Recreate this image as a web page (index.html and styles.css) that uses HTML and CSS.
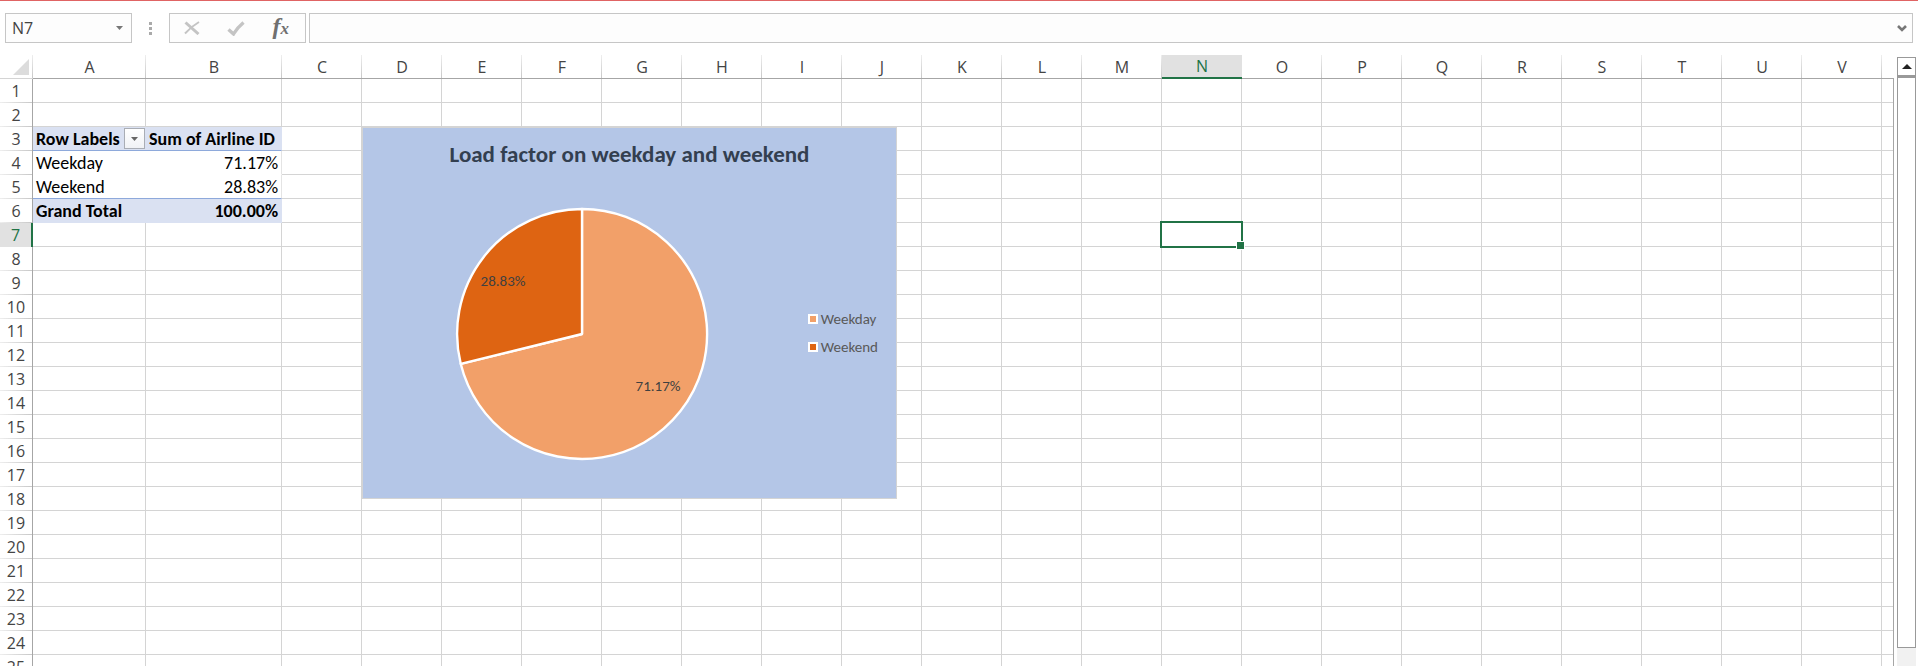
FILE: index.html
```
<!DOCTYPE html>
<html lang="en">
<head>
<meta charset="utf-8">
<title>Load factor workbook</title>
<link rel="stylesheet" href="styles.css">
</head>
<body>
<header class="formula-bar">
  <div class="name-box">
    <input class="name-input" type="text" value="N7" aria-label="Name box">
    <button class="name-toggle" type="button" aria-label="Show names">
      <svg width="7" height="4" viewBox="0 0 7 4"><path d="M0 0h7L3.500 4z" fill="#777"/></svg>
    </button>
  </div>
  <span class="grip"><i></i><i></i><i></i></span>
  <div class="entry-tools">
    <button type="button" aria-label="Cancel">
      <svg width="16" height="14" viewBox="0 0 16 14"><path d="M1.500 1.500L14.500 13" fill="none" stroke="#c4c4c4" stroke-width="3"/><path d="M15 1Q8 5 1 12.500" fill="none" stroke="#c4c4c4" stroke-width="2"/></svg>
    </button>
    <button type="button" aria-label="Enter">
      <svg width="18" height="15" viewBox="0 0 18 15"><path d="M1.500 8.500l5 4.500Q10 7 16.500 1.500" fill="none" stroke="#c4c4c4" stroke-width="3.400"/></svg>
    </button>
    <button class="fx" type="button" aria-label="Insert function">f<span>x</span></button>
  </div>
  <div class="formula-box">
    <input class="formula-input" type="text" aria-label="Formula bar">
    <button class="expand" type="button" aria-label="Expand formula bar">
      <svg width="10" height="7" viewBox="0 0 10 7"><path d="M1 1l4 4 4-4" fill="none" stroke="#777" stroke-width="2.600"/></svg>
    </button>
  </div>
</header>

<main class="workspace">
  <div class="sheet" id="sheet">
    <table class="grid" id="grid"></table>
    <div class="selection"></div>
    <figure class="chart">
      <figcaption class="chart-title">Load factor on weekday and weekend</figcaption>
      <svg class="pie" width="254" height="254" viewBox="-127 -127 254 254" role="img" aria-label="Weekday 71.17%, Weekend 28.83%">
        <g stroke="#fff" stroke-width="2.400" stroke-linejoin="round">
          <path d="M0 0V-125A125 125 0 1 1 -121.300 29.800Z" fill="#f2a069"/>
          <path d="M0 0L-121.300 29.800A125 125 0 0 1 0 -125Z" fill="#de6412"/>
        </g>
        <text class="slice-label" x="-79" y="-48">28.83%</text>
        <text class="slice-label" x="76" y="57">71.17%</text>
      </svg>
      <ul class="legend">
        <li><i class="key weekday"></i>Weekday</li>
        <li><i class="key weekend"></i>Weekend</li>
      </ul>
    </figure>
  </div>
  <div class="scrollbar">
    <button class="scroll-up" type="button" aria-label="Scroll up">
      <svg width="10" height="5" viewBox="0 0 10 5"><path d="M0 5L5 0l5 5z" fill="#222"/></svg>
    </button>
    <div class="track"><div class="thumb"></div></div>
  </div>
</main>
<script src="script.js"></script>
</body>
</html>
```
FILE: styles.css
```
* { box-sizing: border-box; }

html {
  height: 100%;
  overflow: hidden;
}

body {
  margin: 0;
  height: 100%;
  display: flex;
  flex-direction: column;
  overflow: hidden;
  background: #fff;
  border-top: 1px solid #e06464;
  font-family: "Open Sans", "Noto Sans", sans-serif;
  color: #444;
}

button {
  margin: 0;
  padding: 0;
  border: 0;
  background: none;
  color: inherit;
  display: flex;
  align-items: center;
  justify-content: center;
}

.formula-bar {
  display: flex;
  padding: 12px 5px 12px;
}

.name-box,
.entry-tools,
.formula-box {
  display: flex;
  height: 30px;
  border: 1px solid #c6c6c6;
  background: #fdfdfd;
}

.name-box { width: 127px; }

.name-input,
.formula-input {
  flex: 1;
  min-width: 0;
  border: 0;
  padding: 0 6px;
  background: none;
  font: 16px "Open Sans", "Noto Sans", sans-serif;
  color: #444;
  outline: 0;
}

.name-toggle { width: 24px; }

.grip {
  width: 37px;
  display: flex;
  flex-direction: column;
  align-items: center;
  justify-content: center;
  gap: 2px;
}

.grip i {
  width: 3px;
  height: 3px;
  background: #aaa;
}

.entry-tools {
  width: 137px;
  margin-right: 3px;
  padding-right: 2px;
}

.entry-tools button { flex: 1; }

.entry-tools .fx {
  padding-bottom: 3px;
  font: italic bold 24px "Liberation Serif", serif;
  color: #707070;
}

.fx span {
  font-size: 17px;
  padding-top: 5px;
}

.formula-box { flex: 1; }

.expand { width: 20px; }

.workspace {
  flex: 1;
  min-height: 0;
  display: flex;
  gap: 3px;
  padding-right: 2px;
}

.sheet {
  flex: 1;
  min-width: 0;
  position: relative;
  overflow: hidden;
}

.sheet::after {
  content: "";
  position: absolute;
  top: 23px;
  right: 0;
  bottom: 0;
  width: 1px;
  background: #a6a6a6;
}

.grid {
  table-layout: fixed;
  border-collapse: separate;
  border-spacing: 0;
  width: 0;
}

.col-row { width: 33px; }
.col-a { width: 113px; }
.col-b { width: 136px; }
.col { width: 80px; }

.grid tr { height: 24px; }

.grid th,
.grid td {
  height: 24px;
  padding: 0 3px;
  line-height: 22px;
  white-space: nowrap;
}

.grid td {
  border-right: 1px solid #d4d4d4;
  border-bottom: 1px solid #d4d4d4;
  color: #000;
  font-family: Carlito, Calibri, "Noto Sans", sans-serif;
  font-size: 18px;
}

.grid th {
  font-weight: 400;
  font-size: 16px;
  color: #444;
}

.grid thead th {
  border-bottom: 1px solid #a6a6a6;
  background: linear-gradient(#eee, #c8c8c8) right / 1px 100% no-repeat;
}

.grid tbody th {
  border-right: 1px solid #a6a6a6;
  background: linear-gradient(90deg, #eee, #c8c8c8) bottom / 100% 1px no-repeat;
}

.grid thead .corner { border-bottom-color: #d4d4d4; }

.corner svg {
  display: block;
  margin-left: 10px;
}

.grid thead .active {
  border-bottom: 2px solid #217346;
  background: #e1e1e1;
  color: #217346;
}

.grid tbody .active {
  border-right: 2px solid #217346;
  background: #e1e1e1;
  color: #217346;
}

.grid .pivot {
  border-right: 0;
  border-bottom-color: transparent;
}

.grid .pivot-end { border-right: 1px solid #e4e4e4; }
.grid .number { text-align: right; }

.grid .fill {
  background: #dae1f2;
  border-bottom-color: #dae1f2;
  font-weight: 700;
}

.grid .fill.pivot-end { border-right-color: #dae1f2; }

.grid .rule { border-bottom-color: #8ea9db; }

.field {
  display: flex;
  align-items: center;
  justify-content: space-between;
  margin-right: -2px;
}

.filter {
  width: 21px;
  height: 21px;
  border: 1px solid #a9adb5;
  background: linear-gradient(#fff, #f0f2f6);
}

.selection {
  position: absolute;
  left: 1160px;
  top: 166px;
  width: 83px;
  height: 27px;
  border: 2px solid #217346;
}

.selection::after {
  content: "";
  position: absolute;
  right: -4px;
  bottom: -4px;
  width: 7px;
  height: 7px;
  border: 1px solid #fff;
  background: #217346;
}

.chart {
  position: absolute;
  left: 362px;
  top: 72px;
  width: 535px;
  height: 372px;
  margin: 0;
  border: 1px solid #d4d4d4;
  background: #b4c6e7;
  font-family: Carlito, Calibri, "Noto Sans", sans-serif;
}

.chart-title {
  padding-top: 12px;
  text-align: center;
  font-size: 23px;
  line-height: 28px;
  font-weight: 700;
  color: #333f50;
}

.pie {
  position: absolute;
  left: 92px;
  top: 79px;
}

.slice-label {
  font-size: 15px;
  fill: #404040;
  text-anchor: middle;
}

.legend {
  position: absolute;
  right: 18px;
  top: 181px;
  margin: 0;
  padding: 0;
  list-style: none;
  display: grid;
  gap: 8px;
  font-size: 15px;
  line-height: 20px;
  color: #595959;
}

.legend li {
  display: flex;
  align-items: center;
  gap: 3px;
}

.key {
  width: 10px;
  height: 10px;
  border: 2px solid #fff;
}

.weekday { background: #f2a069; }
.weekend { background: #de6412; }

.scrollbar {
  width: 19px;
  margin-top: 2px;
  display: flex;
  flex-direction: column;
  background: #f1f1f1;
}

.scroll-up {
  height: 19px;
  border: 1px solid #999;
  background: #fff;
}

.track {
  flex: 1;
  min-height: 0;
}

.thumb {
  height: 97%;
  border: 1px solid #999;
  border-top-width: 2px;
  background: #fff;
}
```
FILE: script.js
```
const activeColumn = "N";
const activeRow = 7;
const rowHeight = 24;
const columnWidth = 80;
const leadingWidth = 282;

const arrow = '<svg width="7" height="4" viewBox="0 0 7 4"><path d="M0 0h7L3.500 4z" fill="#666"/></svg>';
const filterField = '<div class="field">Row Labels<button class="filter" type="button" aria-label="Filter row labels">' + arrow + "</button></div>";

const cells = {
  A3: [filterField, "pivot fill rule"],
  B3: ["Sum of Airline ID", "pivot pivot-end fill rule"],
  A4: ["Weekday", "pivot"],
  B4: ["71.17%", "pivot pivot-end number"],
  A5: ["Weekend", "pivot rule"],
  B5: ["28.83%", "pivot pivot-end number rule"],
  A6: ["Grand Total", "pivot fill"],
  B6: ["100.00%", "pivot pivot-end fill number"]
};

const columnClass = { A: "col-a", B: "col-b" };

function columnName(index) {
  const last = String.fromCharCode(65 + (index % 26));
  return index < 26 ? last : columnName(Math.floor(index / 26) - 1) + last;
}

// Fills the sheet with as many rows and columns as fit; a column cut by the edge has no letter.
function drawGrid() {
  const sheet = document.getElementById("sheet");
  const whole = Math.max(2, 2 + Math.floor((sheet.clientWidth - leadingWidth) / columnWidth));
  const rowCount = Math.ceil(sheet.clientHeight / rowHeight) - 1;
  const columns = Array.from({ length: whole + 1 }, (_, i) => columnName(i));

  let html = '<colgroup><col class="col-row">';
  for (const c of columns) html += `<col class="${columnClass[c] || "col"}">`;
  html += '</colgroup><thead><tr><th class="corner"><svg width="16" height="16" viewBox="0 0 16 16"><path d="M16 0v16H0z" fill="#dcdcdc"/></svg></th>';
  columns.forEach((c, i) => {
    html += `<th scope="col"${c === activeColumn ? ' class="active"' : ""}>${i < whole ? c : ""}</th>`;
  });
  html += "</tr></thead><tbody>";
  for (let r = 1; r <= rowCount; r++) {
    html += `<tr><th scope="row"${r === activeRow ? ' class="active"' : ""}>${r}</th>`;
    for (const c of columns) {
      const [text, cls] = cells[c + r] || ["", ""];
      html += cls ? `<td class="${cls}">${text}</td>` : "<td></td>";
    }
    html += "</tr>";
  }
  document.getElementById("grid").innerHTML = html + "</tbody>";
}

drawGrid();
window.addEventListener("resize", drawGrid);
```
